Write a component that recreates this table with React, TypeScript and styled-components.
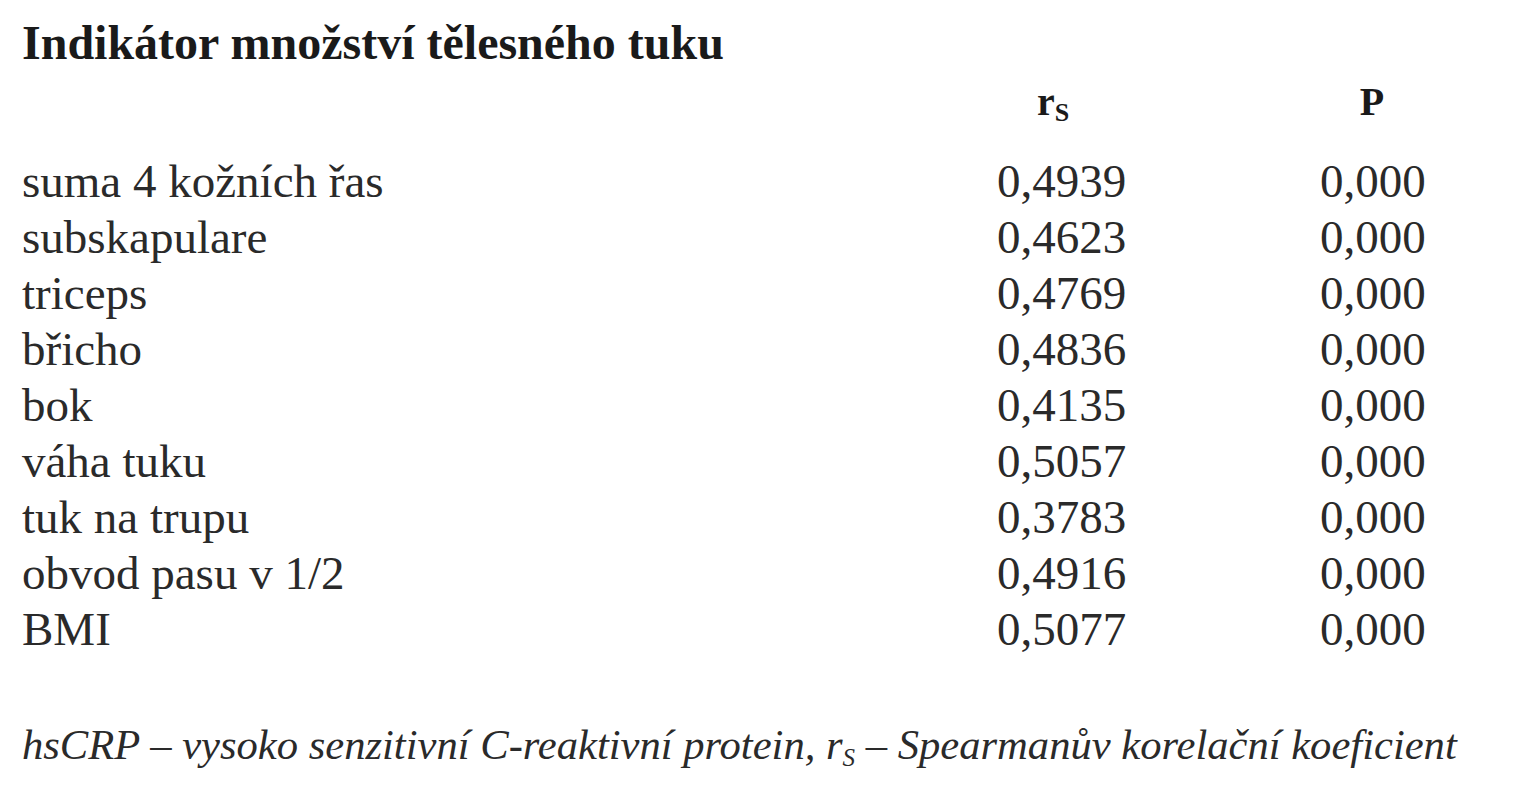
import React from 'react';
import styled, { createGlobalStyle } from 'styled-components';

const Global = createGlobalStyle`
  html, body {
    margin: 0;
    padding: 0;
    background: #ffffff;
  }
  body {
    font-family: 'Liberation Serif', 'Times New Roman', serif;
    color: #1a1a1a;
  }
`;

const Page = styled.div`
  width: 1535px;
  height: 800px;
  box-sizing: border-box;
  padding: 18px 0 0 22px;
  overflow: hidden;
`;

const Title = styled.h1`
  margin: 0;
  font-size: 48px;
  line-height: 50px;
  font-weight: bold;
  color: #1a1a1a;
`;

const Table = styled.div`
  display: grid;
  grid-template-columns: 975px 323px 1fr;
  margin-top: 8px;
`;

const Head = styled.div<{ $center: number }>`
  font-size: 40px;
  font-weight: bold;
  line-height: 52px;
  height: 77px;
  width: ${(p) => p.$center * 2}px;
  text-align: center;
  color: #1a1a1a;

  sub {
    font-size: 26px;
    vertical-align: -6px;
  }
`;

const Cell = styled.div`
  font-size: 47px;
  line-height: 56px;
  color: #2a2a2a;
  white-space: nowrap;
`;

const Note = styled.p`
  margin: 63px 0 0;
  font-size: 42.6px;
  font-style: italic;
  line-height: 50px;
  color: #2a2a2a;
  white-space: nowrap;

  sub {
    font-size: 25px;
    vertical-align: -7px;
  }
`;

const rows: [string, string, string][] = [
  ['suma 4 kožních řas', '0,4939', '0,000'],
  ['subskapulare', '0,4623', '0,000'],
  ['triceps', '0,4769', '0,000'],
  ['břicho', '0,4836', '0,000'],
  ['bok', '0,4135', '0,000'],
  ['váha tuku', '0,5057', '0,000'],
  ['tuk na trupu', '0,3783', '0,000'],
  ['obvod pasu v 1/2', '0,4916', '0,000'],
  ['BMI', '0,5077', '0,000'],
];

export default function App() {
  return (
    <>
      <Global />
      <Page>
        <Title>Indikátor množství tělesného tuku</Title>
        <Table>
          <div />
          <Head $center={56}>
            r<sub>S</sub>
          </Head>
          <Head $center={52}>P</Head>
          {rows.map(([name, rs, p]) => (
            <React.Fragment key={name}>
              <Cell>{name}</Cell>
              <Cell>{rs}</Cell>
              <Cell>{p}</Cell>
            </React.Fragment>
          ))}
        </Table>
        <Note>
          hsCRP – vysoko senzitivní C-reaktivní protein, r<sub>S</sub> – Spearmanův korelační koeficient
        </Note>
      </Page>
    </>
  );
}
